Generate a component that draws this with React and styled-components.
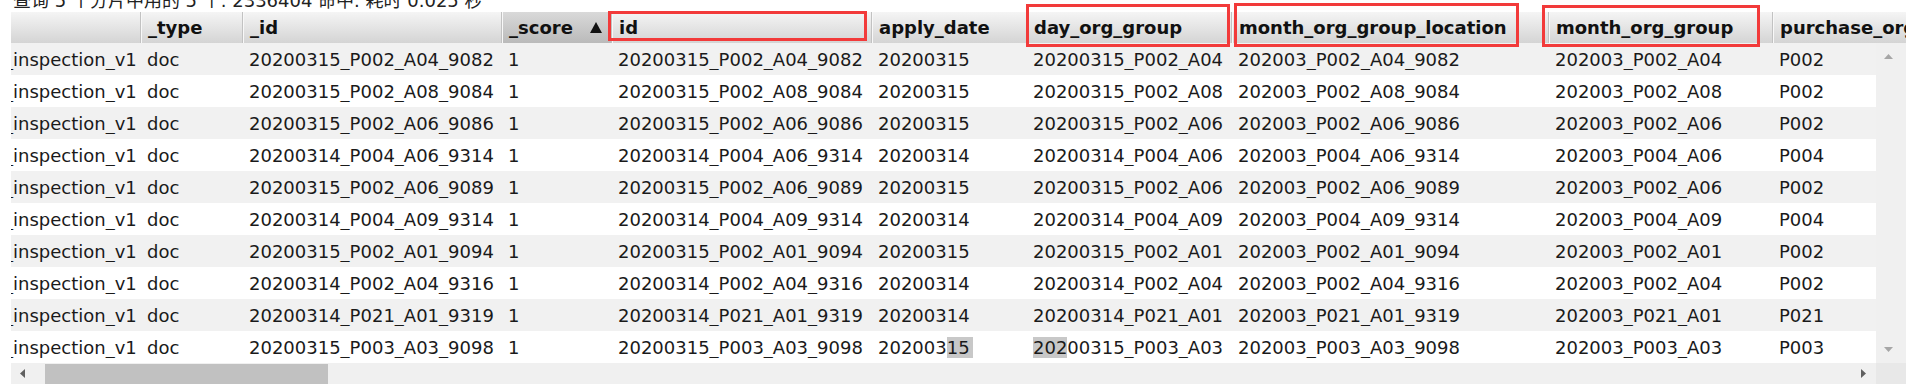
import React from 'react';
import styled, { createGlobalStyle } from 'styled-components';

const GlobalStyle = createGlobalStyle`
    body {
        margin: 0;
        background: #fff;
        font-family: "DejaVu Sans", "Noto Sans CJK SC", sans-serif;
    }
`

const cols = '129px 102px 259px 110px 260px 155px 205px 317px 224px 320px'

const Page = styled.div`
    position: relative;
    width: 1906px;
    height: 384px;
    overflow: hidden;
    background: #fff;
`
const Summary = styled.div`
    margin: -10px 0 0 13px;
    height: 22px;
    line-height: 22px;
    font-size: 18px;
    color: #222;
    white-space: nowrap;
    font-family: "DejaVu Sans", "Noto Sans CJK SC", sans-serif;
`
const Table = styled.div`
    margin-left: 11px;
    width: 1895px;
    font-size: 18px;
    color: #1a1a1a;
`
const HeaderRow = styled.div`
    display: grid;
    grid-template-columns: ${cols};
    height: 31px;
    overflow: hidden;
    background: linear-gradient(#f5f5f5, #d4d4d4);
`
const HeadCell = styled.div`
    display: flex;
    align-items: center;
    box-sizing: border-box;
    padding: 0 9px 0 7px;
    border-left: ${p => p.$first ? 'none' : '1px solid #c2c2c2'};
    box-shadow: ${p => p.$first ? 'none' : 'inset 1px 0 0 #f8f8f8'};
    background: ${p => p.$sorted ? 'linear-gradient(#d9d9d9, #bababa)' : 'linear-gradient(#f5f5f5, #d4d4d4)'};
    font-weight: bold;
    color: #111;
    white-space: nowrap;
    overflow: hidden;
`
const SortMark = styled.svg`
    margin-left: auto;
    flex: none;
`
const Body = styled.div`
    display: flex;
    height: 320px;
`
const Rows = styled.div`
    width: 1865px;
    overflow: hidden;
`
const Row = styled.div`
    display: grid;
    grid-template-columns: ${cols};
    height: 32px;
    align-items: center;
    background: ${p => p.$odd ? '#f1f1f1' : '#fff'};
`
const Cell = styled.div`
    box-sizing: border-box;
    padding-left: ${p => p.$cut ? '0' : '7px'};
    text-indent: ${p => p.$cut ? '-7px' : '0'};
    white-space: nowrap;
    overflow: hidden;
`
const Sel = styled.span`
    background: #c8c8c8;
    padding-right: ${p => p.$tail ? '3px' : '0'};
`
const VScroll = styled.div`
    width: 30px;
    background: #f0f0f0;
    display: flex;
    flex-direction: column;
    justify-content: space-between;
    align-items: center;
    padding: 11px 6px 11px 0;
    box-sizing: border-box;
`
const HScrollRow = styled.div`
    display: flex;
    height: 21px;
`
const HTrack = styled.div`
    width: 1865px;
    display: flex;
    background: #f0f0f0;
`
const ArrowBox = styled.div`
    width: ${p => p.$w}px;
    display: flex;
    align-items: center;
    justify-content: center;
    flex: none;
`
const Thumb = styled.div`
    width: 283px;
    margin: 1px 0 0 12px;
    background: #c1c1c1;
`
const Spacer = styled.div`
    flex: 1;
`
const Corner = styled.div`
    width: 30px;
    background: #e8e8e8;
`
const Marker = styled.div`
    position: absolute;
    left: ${p => p.$x}px;
    top: ${p => p.$y}px;
    width: ${p => p.$w}px;
    height: ${p => p.$h}px;
    box-sizing: border-box;
    border: 3px solid #f23a3a;
    pointer-events: none;
`

const ids = [
    '20200315_P002_A04_9082',
    '20200315_P002_A08_9084',
    '20200315_P002_A06_9086',
    '20200314_P004_A06_9314',
    '20200315_P002_A06_9089',
    '20200314_P004_A09_9314',
    '20200315_P002_A01_9094',
    '20200314_P002_A04_9316',
    '20200314_P021_A01_9319',
    '20200315_P003_A03_9098',
]

const headers = ['', '_type', '_id', '_score', 'id', 'apply_date', 'day_org_group', 'month_org_group_location', 'month_org_group', 'purchase_org_id']

const Arrow = ({ dir, color }) => {
    const pts = {
        up: '0,5 4.5,0 9,5',
        down: '0,0 4.5,5 9,0',
        left: '5,0 0,4.5 5,9',
        right: '0,0 5,4.5 0,9',
    }[dir]
    const vertical = dir === 'up' || dir === 'down'
    return (
        <svg width={vertical ? 9 : 5} height={vertical ? 5 : 9} viewBox={vertical ? '0 0 9 5' : '0 0 5 9'}>
            <polygon points={pts} fill={color} />
        </svg>
    )
}

export default function App() {
    return (
        <Page>
            <GlobalStyle />
            <Summary>查询 5 个分片中用的 5 个. 2336404 命中. 耗时 0.025 秒</Summary>
            <Table>
                <HeaderRow>
                    {headers.map((h, i) => (
                        <HeadCell key={i} $first={i === 0} $sorted={h === '_score'}>
                            {h}
                            {h === '_score' && (
                                <SortMark width="12" height="11" viewBox="0 0 12 11">
                                    <polygon points="0,11 6,0 12,11" fill="#111" />
                                </SortMark>
                            )}
                        </HeadCell>
                    ))}
                </HeaderRow>
                <Body>
                    <Rows>
                        {ids.map((id, i) => {
                            const day = id.slice(0, 8)
                            const dayGroup = id.slice(0, 17)
                            const monthLoc = id.slice(0, 6) + id.slice(8)
                            const monthGroup = monthLoc.slice(0, 15)
                            const purchase = id.slice(9, 13)
                            const last = i === ids.length - 1
                            return (
                                <Row key={id} $odd={i % 2 === 0}>
                                    <Cell $cut>_inspection_v1</Cell>
                                    <Cell>doc</Cell>
                                    <Cell>{id}</Cell>
                                    <Cell>1</Cell>
                                    <Cell>{id}</Cell>
                                    <Cell>
                                        {last ? <>{day.slice(0, 6)}<Sel $tail>{day.slice(6)}</Sel></> : day}
                                    </Cell>
                                    <Cell>
                                        {last ? <><Sel>{dayGroup.slice(0, 3)}</Sel>{dayGroup.slice(3)}</> : dayGroup}
                                    </Cell>
                                    <Cell>{monthLoc}</Cell>
                                    <Cell>{monthGroup}</Cell>
                                    <Cell>{purchase}</Cell>
                                </Row>
                            )
                        })}
                    </Rows>
                    <VScroll>
                        <Arrow dir="up" color="#a6a6a6" />
                        <Arrow dir="down" color="#a6a6a6" />
                    </VScroll>
                </Body>
                <HScrollRow>
                    <HTrack>
                        <ArrowBox $w={22}><Arrow dir="left" color="#606060" /></ArrowBox>
                        <Thumb />
                        <Spacer />
                        <ArrowBox $w={26}><Arrow dir="right" color="#606060" /></ArrowBox>
                    </HTrack>
                    <Corner />
                </HScrollRow>
            </Table>
            <Marker $x={608} $y={11} $w={259} $h={30} />
            <Marker $x={1026} $y={4} $w={204} $h={43} />
            <Marker $x={1234} $y={3} $w={285} $h={44} />
            <Marker $x={1542} $y={5} $w={218} $h={42} />
        </Page>
    )
}
